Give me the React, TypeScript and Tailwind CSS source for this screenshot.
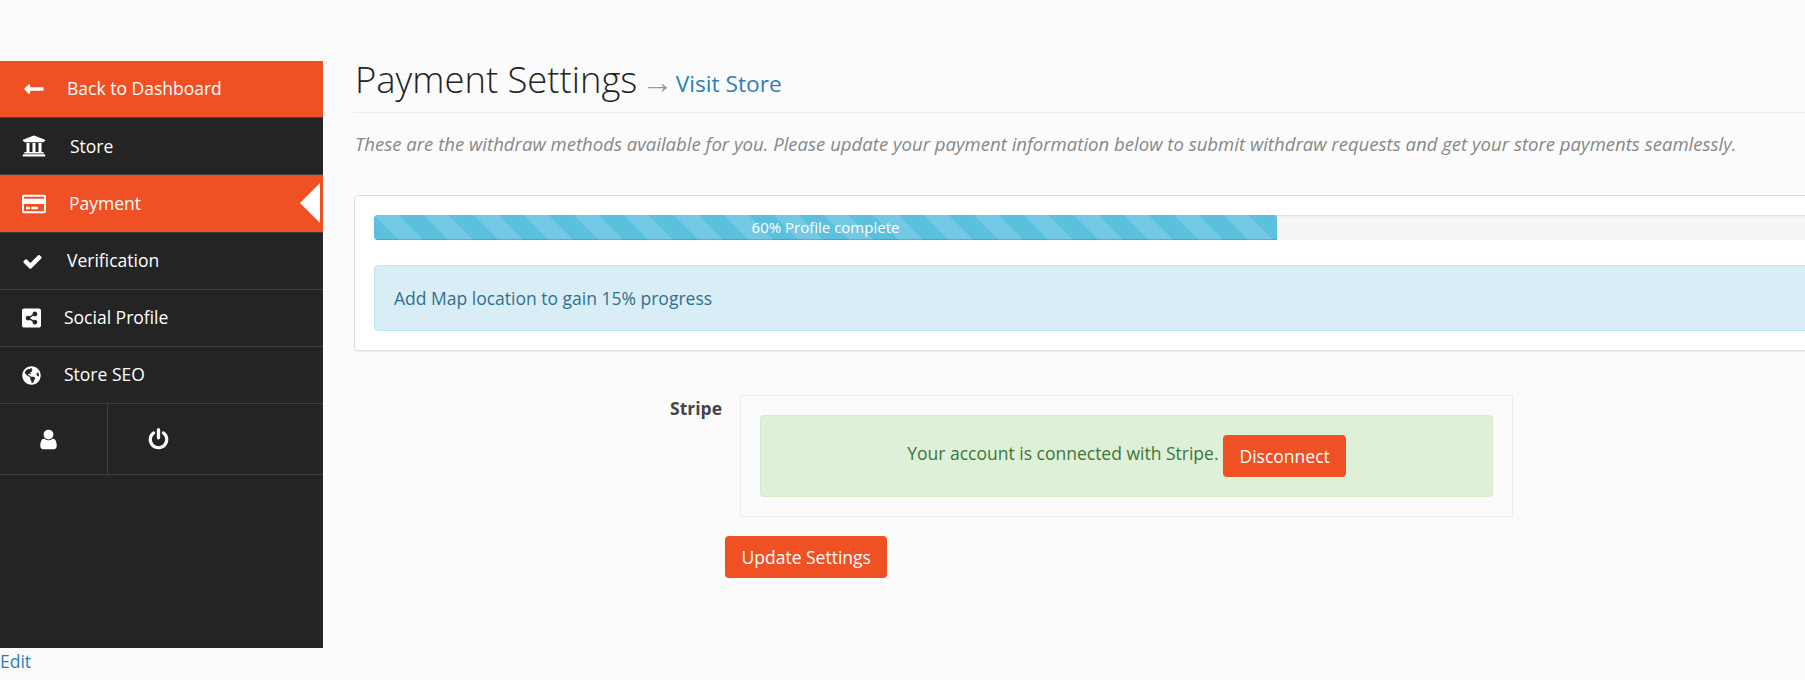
import type { ReactNode } from "react";
import {
  FaGlobeAmericas,
  FaLongArrowAltLeft,
  FaRegCreditCard,
  FaShareAltSquare,
  FaUniversity,
} from "react-icons/fa";

const NavRow = ({
  icon,
  label,
  labelClass,
  active,
  arrow,
}: {
  icon: ReactNode;
  label: string;
  labelClass: string;
  active?: boolean;
  arrow?: boolean;
}) => (
  <div
    className={`relative flex items-center border-b border-[#3f3f3f] pl-[22px] text-[17.5px] text-white ${
      active ? "bg-[#ef5024]" : ""
    } ${arrow ? "h-[58px]" : "h-[57px]"}`}
  >
    <span className="flex w-[24px] justify-center">{icon}</span>
    <span className={labelClass}>{label}</span>
    {arrow && (
      <span className="absolute right-[3px] top-[8px] h-0 w-0 border-y-[20px] border-r-[20px] border-y-transparent border-r-white" />
    )}
  </div>
);

// font awesome 4 shapes, the package only has the newer ones
const CheckIcon = () => (
  <svg viewBox="0 0 1792 1792" className="mr-[3px] h-[21px] w-[21px]" fill="currentColor">
    <path d="M1671 566q0 40-28 68l-724 724-136 136q-28 28-68 28t-68-28l-136-136-362-362q-28-28-28-68t28-68l136-136q28-28 68-28t68 28l294 295 656-657q28-28 68-28t68 28l136 136q28 28 28 68z" />
  </svg>
);

const UserIcon = () => (
  <svg viewBox="0 0 1792 1792" className="h-[23px] w-[23px]" fill="currentColor">
    <path d="M1536 1399q0 109-62.500 187t-150.500 78h-854q-88 0-150.500-78t-62.500-187q0-85 8.500-160.500t31.500-152 58.500-131 94-89 134.500-34.500q131 128 313 128t313-128q76 0 134.500 34.500t94 89 58.500 131 31.500 152 8.500 160.500zm-256-887q0 159-112.500 271.500t-271.500 112.500-271.500-112.500-112.500-271.500 112.500-271.500 271.500-112.500 271.500 112.500 112.500 271.500z" />
  </svg>
);

const PowerIcon = () => (
  <svg viewBox="0 0 1792 1792" className="h-[23px] w-[23px]" fill="currentColor">
    <path d="M1664 896q0 156-61 298t-164 245-245 164-298 61-298-61-245-164-164-245-61-298q0-182 80.500-343t226.500-270q43-32 95.500-25t83.500 50q32 42 24.500 94.500t-49.500 84.500q-98 74-151.500 181t-53.500 228q0 104 40.500 198.500t109.500 163.500 163.500 109.500 198.500 40.500 198.500-40.500 163.500-109.500 109.500-163.500 40.500-198.500q0-121-53.500-228t-151.500-181q-42-32-49.500-84.500t24.500-94.500q31-43 84-50t95 25q146 109 226.500 270t80.500 343zm-640-768v640q0 52-38 90t-90 38-90-38-38-90v-640q0-52 38-90t90-38 90 38 38 90z" />
  </svg>
);

export default function App() {
  return (
    <div className="flex h-[680px] w-[1805px] overflow-hidden bg-[#fbfbfb] font-['Open_Sans',sans-serif] text-[17.5px] text-[#333]">
      {/* Sidebar */}
      <div className="w-[323px] shrink-0 pt-[61px]">
        <div className="h-[587px] bg-[#242424]">
          <NavRow
            active
            icon={<FaLongArrowAltLeft className="text-[22px]" />}
            label="Back to Dashboard"
            labelClass="ml-[21px] mb-[2px]"
          />
          <NavRow
            icon={<FaUniversity className="text-[24px]" />}
            label="Store"
            labelClass="ml-[24px]"
          />
          <NavRow
            active
            arrow
            icon={<FaRegCreditCard className="text-[24px]" />}
            label="Payment"
            labelClass="ml-[23px]"
          />
          <NavRow
            icon={<CheckIcon />}
            label="Verification"
            labelClass="ml-[21px] mb-[2px]"
          />
          <NavRow
            icon={<FaShareAltSquare className="mr-[5px] text-[22px]" />}
            label="Social Profile"
            labelClass="ml-[18px] mb-[2px]"
          />
          <NavRow
            icon={<FaGlobeAmericas className="mr-[5px] text-[19px]" />}
            label="Store SEO"
            labelClass="ml-[18px] mb-[2px]"
          />
          <div className="flex h-[71px] border-b border-[#3f3f3f] text-white">
            <div className="flex w-[108px] items-center justify-center border-r border-[#3f3f3f] pr-[10px]">
              <UserIcon />
            </div>
            <div className="flex w-[100px] items-center justify-center">
              <PowerIcon />
            </div>
          </div>
        </div>
        <a className="block leading-[26px] text-[#2a80b9]">Edit</a>
      </div>

      {/* Content */}
      <div className="ml-[31px] w-[1545px] shrink-0 pt-[53px]">
        <div className="flex h-[60px] items-baseline border-b border-[#eee] pl-[1px] text-[36.4px] font-light leading-[52px] text-[#222]">
          Payment Settings
          <span className="ml-[4px] font-['Liberation_Sans',sans-serif] text-[32px] text-[#999]">→</span>
          <a className="ml-[2.5px] -translate-y-px text-[22.7px] font-normal text-[#2a80b9]">Visit Store</a>
        </div>
        <p className="mt-[19px] pl-[1px] text-[18.57px] italic leading-[24px] text-[#888]">
          These are the withdraw methods available for you. Please update your payment information
          below to submit withdraw requests and get your store payments seamlessly.
        </p>

        <div className="mt-[39px] h-[156px] rounded-[4px] border border-[#ddd] bg-white px-[19px] pt-[19px] shadow-[0_1px_1px_rgba(0,0,0,0.05)]">
          <div className="h-[25px] overflow-hidden rounded-[4px] bg-[#f5f5f5] shadow-[inset_0_1px_2px_rgba(0,0,0,0.1)]">
            <div className="h-full w-[60%] bg-[#5bc0de] bg-[linear-gradient(45deg,rgba(255,255,255,0.15)_25%,transparent_25%,transparent_50%,rgba(255,255,255,0.15)_50%,rgba(255,255,255,0.15)_75%,transparent_75%,transparent)] bg-[length:50px_50px] text-center text-[15px] leading-[25px] text-white shadow-[inset_0_-1px_0_rgba(0,0,0,0.15)]">
              60% Profile complete
            </div>
          </div>
          <div className="mt-[25px] flex h-[66px] items-center rounded-[4px] border border-[#bce8f1] bg-[#d9edf7] pl-[19px] text-[#31708f]">
            Add Map location to gain 15% progress
          </div>
        </div>

        <div className="ml-[299px] mt-[44px] flex">
          <div className="w-[69px] pt-[1px] text-right font-bold leading-[24px] text-[#444]">Stripe</div>
          <div className="ml-[18px] h-[122px] w-[773px] border border-[#eee] p-[19px]">
            <div className="flex h-[82px] items-center justify-center rounded-[4px] border border-[#d6e9c6] bg-[#dff0d8] text-[#3c763d]">
              <span className="mb-[5px]">Your account is connected with Stripe.</span>
              <button className="ml-[5px] h-[42px] rounded-[4px] bg-[#ef5024] px-[16px] text-white">
                Disconnect
              </button>
            </div>
          </div>
        </div>

        <button className="ml-[371px] mt-[19px] h-[42px] rounded-[4px] bg-[#ef5024] px-[16.5px] text-white">
          Update Settings
        </button>
      </div>
    </div>
  );
}
